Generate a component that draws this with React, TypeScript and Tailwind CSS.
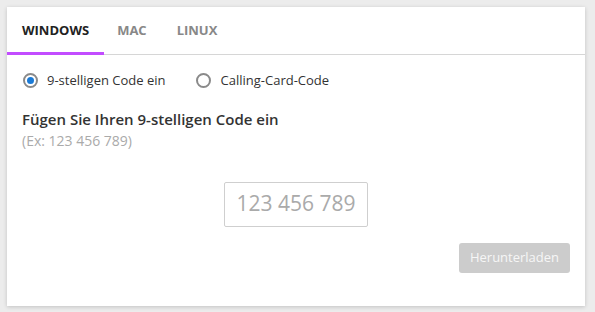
export default function App() {
  return (
    <div className="w-[595px] h-[312px] bg-[#ececec] p-[7px] pr-[10px] font-['Open_Sans',sans-serif]">
      <div className="bg-white h-[299px] shadow-[0_1px_4px_rgba(0,0,0,0.18)] flex flex-col">
        <div className="flex border-b border-[#d6d6d6] h-[48px] items-stretch">
          <div className="px-[15px] pt-[3px] flex items-center text-[13px] font-bold text-[#222] border-b-[3px] border-[#c24cff] -mb-[1px]">
            WINDOWS
          </div>
          <div className="pl-[13px] pr-[15px] flex items-center text-[13px] font-bold text-[#888] pt-[1px]">MAC</div>
          <div className="pl-[15px] pr-[15px] flex items-center text-[13px] font-bold text-[#888] pt-[1px]">LINUX</div>
        </div>
        <div className="flex items-center gap-[30px] px-[16px] mt-[16px] text-[13px] text-[#333]">
          <label className="flex items-center gap-[9px]">
            <span className="w-[15px] h-[15px] rounded-full border-2 border-[#8a8a8a] flex items-center justify-center">
              <span className="w-[7px] h-[7px] rounded-full bg-[#1a7ad6]" />
            </span>
            9-stelligen Code ein
          </label>
          <label className="flex items-center gap-[10px]">
            <span className="w-[15px] h-[15px] rounded-full border-2 border-[#8a8a8a]" />
            Calling-Card-Code
          </label>
        </div>
        <div className="px-[15px] mt-[17px]">
          <div className="text-[15px] font-semibold text-[#333] leading-[22px]">Fügen Sie Ihren 9-stelligen Code ein</div>
          <div className="text-[14px] text-[#aaa] leading-[21px]">(Ex: 123 456 789)</div>
        </div>
        <div className="flex justify-center mt-[31px]">
          <div className="w-[144px] h-[45px] border border-[#cfcfcf] rounded-[2px] flex items-center justify-center text-[21px] text-[#aaa]">
            123 456 789
          </div>
        </div>
        <div className="flex justify-end px-[15px] mt-[16px]">
          <button className="w-[111px] h-[30px] bg-[#cccccc] rounded-[3px] text-[13px] text-[#f6f6f6]">Herunterladen</button>
        </div>
      </div>
    </div>
  )
}
